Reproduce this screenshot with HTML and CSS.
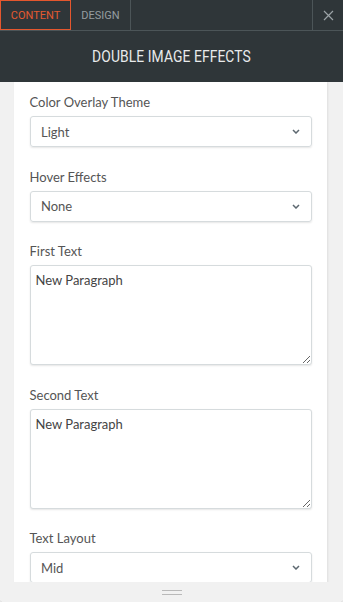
FILE: index.html
```html
<!DOCTYPE html>
<html>
<head>
<meta charset="utf-8">
<link rel="stylesheet" href="styles.css">
</head>
<body>
<div class="app">
  <div class="tabs">
    <div class="tab active">CONTENT</div>
    <div class="tab">DESIGN</div>
    <div class="spacer"></div>
    <div class="close">
      <svg width="11" height="11" viewBox="0 0 11 11"><path d="M1 1L10 10M10 1L1 10" stroke="#9ba3a6" stroke-width="1.2" fill="none"/></svg>
    </div>
  </div>
  <div class="header"><span class="title">DOUBLE IMAGE EFFECTS</span></div>
  <div class="scroll">
    <div class="panel">
      <div class="field">
        <div class="label">Color Overlay Theme</div>
        <div class="select"><span>Light</span><svg class="chev" width="8" height="5" viewBox="0 0 8 5"><path d="M1 1L4 4L7 1" stroke="#5d6870" stroke-width="1.5" fill="none"/></svg></div>
      </div>
      <div class="field">
        <div class="label">Hover Effects</div>
        <div class="select"><span>None</span><svg class="chev" width="8" height="5" viewBox="0 0 8 5"><path d="M1 1L4 4L7 1" stroke="#5d6870" stroke-width="1.5" fill="none"/></svg></div>
      </div>
      <div class="field">
        <div class="label">First Text</div>
        <textarea class="area">New Paragraph</textarea>
      </div>
      <div class="field">
        <div class="label">Second Text</div>
        <textarea class="area">New Paragraph</textarea>
      </div>
      <div class="field">
        <div class="label">Text Layout</div>
        <div class="select"><span>Mid</span><svg class="chev" width="8" height="5" viewBox="0 0 8 5"><path d="M1 1L4 4L7 1" stroke="#5d6870" stroke-width="1.5" fill="none"/></svg></div>
      </div>
    </div>
  </div>
  <div class="footer"><div class="grip"></div></div>
</div>
</body>
</html>
```
FILE: styles.css
```css
* { box-sizing: border-box; }
html, body { margin: 0; padding: 0; background: #fff; }
body { font-family: Lato, "Open Sans", sans-serif; }
.app {
  width: 343px;
  height: 602px;
  display: flex;
  flex-direction: column;
  border-radius: 0 0 4px 4px;
  overflow: hidden;
  box-shadow: 0 1px 2px rgba(0,0,0,0.25);
}
.tabs {
  height: 31px;
  flex: none;
  display: flex;
  background: #2f3639;
  border-bottom: 1px solid #4c5558;
}
.tab {
  height: 30px;
  display: flex;
  align-items: center;
  justify-content: center;
  font-family: Roboto, sans-serif;
  font-size: 11px;
  color: #959da0;
  border-right: 1px solid #4c5558;
  padding: 0 11px;
}
.tab.active {
  width: 71px;
  color: #e45a30;
  border: 1px solid #e4572e;
}
.tab:nth-child(2) { width: 60px; }
.spacer { flex: 1; border-right: 1px solid #4c5558; }
.close {
  width: 30px;
  display: flex;
  align-items: center;
  justify-content: center;
}
.header {
  height: 51px;
  flex: none;
  background: #2f3639;
  display: flex;
  align-items: center;
  justify-content: center;
}
.title {
  display: inline-block;
  font-family: Roboto, sans-serif;
  font-size: 16.5px;
  color: #e8eaeb;
  transform: scaleX(0.84);
  letter-spacing: 0.1px;
}
.scroll {
  flex: 1;
  background: #f1f1f1;
  padding: 0 16px 0 14px;
  overflow: hidden;
}
.panel {
  background: #fff;
  padding: 11px 15px 0 15.5px;
  box-shadow: 1px 0 2px rgba(0,0,0,0.08);
  display: flex;
  flex-direction: column;
  gap: 20.5px;
  min-height: 100%;
}
.label {
  font-size: 13px;
  line-height: 17px;
  color: #555;
  padding-top: 1px;
  margin-bottom: 5px;
}
.select {
  height: 31px;
  border: 1px solid #d6dbdd;
  border-radius: 3px;
  box-shadow: 0 1px 2px rgba(0,0,0,0.1);
  display: flex;
  align-items: center;
  justify-content: space-between;
  padding: 0 11px 0 10.5px;
  font-size: 13px;
  color: #555;
}
.area {
  display: block;
  width: 100%;
  height: 100px;
  border: 1px solid #d6dbdd;
  border-radius: 3px;
  box-shadow: 0 1px 2px rgba(0,0,0,0.1);
  padding: 6px 5px;
  font-family: Lato, "Open Sans", sans-serif;
  font-size: 13px;
  line-height: 17px;
  color: #444;
  resize: vertical;
  margin: 0;
}
.footer {
  height: 20px;
  flex: none;
  background: #f1f1f1;
  display: flex;
  align-items: center;
  justify-content: center;
}
.grip {
  width: 20px;
  height: 5px;
  border-top: 1px solid #b9b9b9;
  border-bottom: 1px solid #b9b9b9;
  margin-top: 1px;
}
```
